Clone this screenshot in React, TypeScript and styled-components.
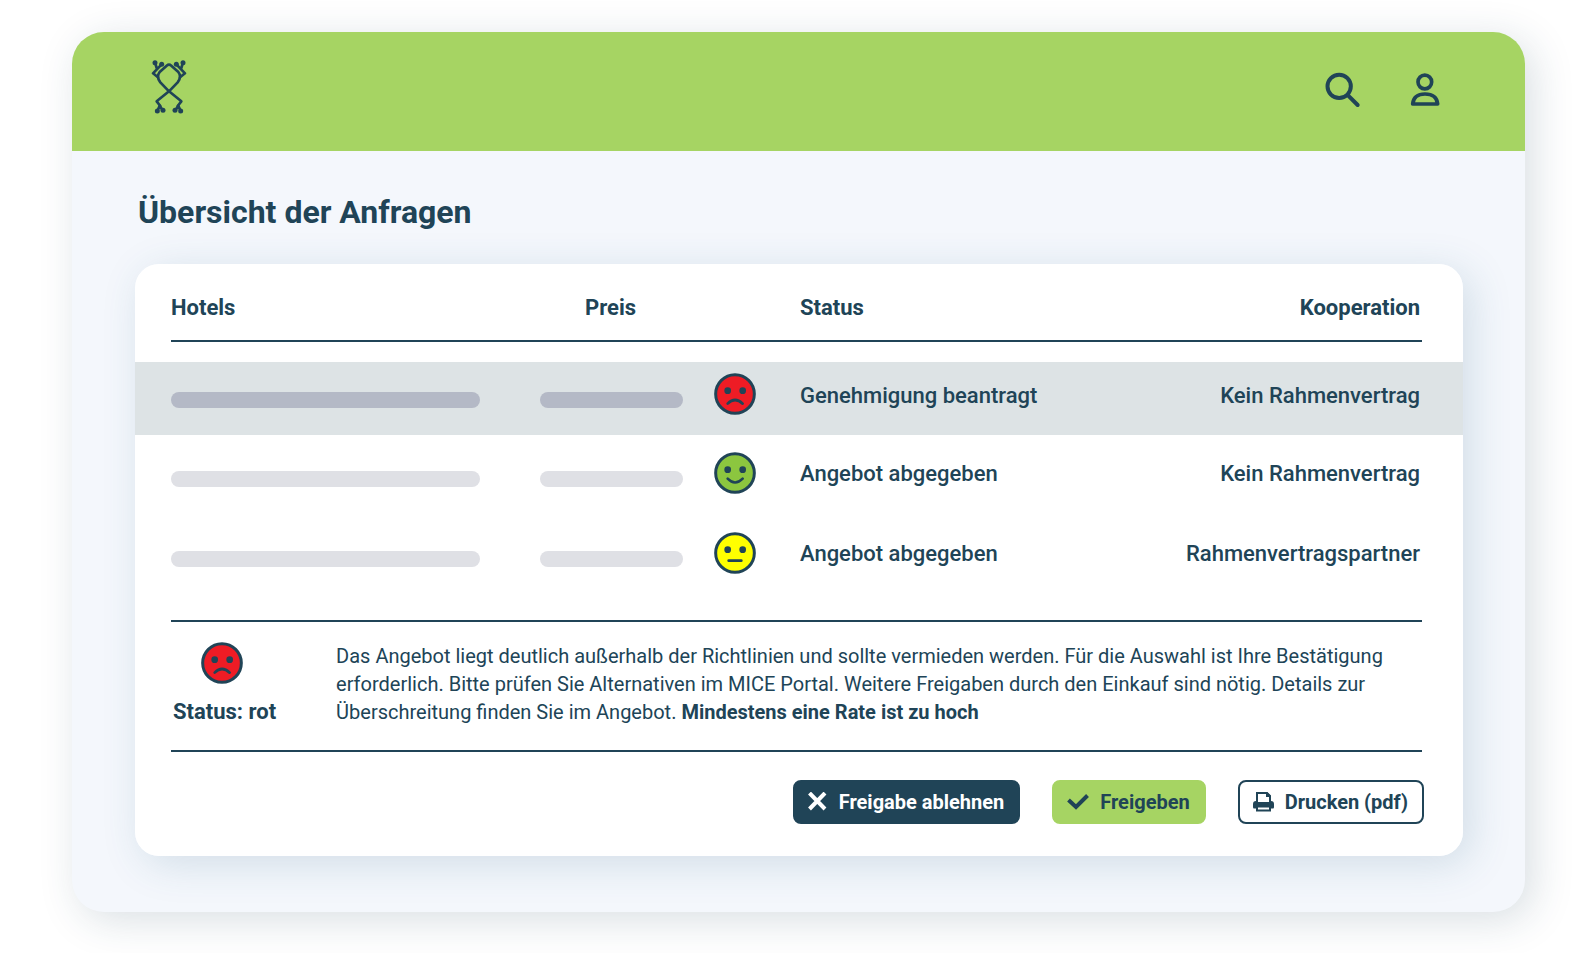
import React from "react";
import styled, { createGlobalStyle } from "styled-components";

const ink = "#204457";
const lime = "#a6d463";

const GlobalStyle = createGlobalStyle`
  *, *::before, *::after { box-sizing: border-box; }
  body {
    margin: 0;
    background: #ffffff;
    color: ${ink};
    font-family: Roboto, "Liberation Sans", sans-serif;
  }
`;

const Page = styled.div`
  padding: 32px 67px 41px 72px;
`;

const Window = styled.div`
  border-radius: 32px;
  background: #f4f7fc;
  box-shadow: 8px 8px 40px rgba(32, 68, 87, 0.17);
`;

const TopBar = styled.header`
  display: flex;
  align-items: center;
  justify-content: space-between;
  height: 119px;
  padding: 0 85px 10px 78px;
  border-radius: 32px 32px 0 0;
  background: ${lime};
`;

const LogoLink = styled.a`
  display: flex;
  color: ${ink};
`;

const Tools = styled.div`
  display: flex;
  align-items: center;
  gap: 49px;
  padding-top: 6px;
`;

const IconButton = styled.button`
  display: flex;
  padding: 0;
  border: 0;
  background: none;
  color: ${ink};
  cursor: pointer;
`;

const Main = styled.main`
  padding: 39px 62px 56px 63px;
`;

const Title = styled.h1`
  margin: 0 0 30px 3px;
  font-size: 32px;
  line-height: 44px;
  font-weight: 700;
`;

const Card = styled.section`
  overflow: hidden;
  padding: 0 41px 32px 36px;
  border-radius: 24px;
  background: #ffffff;
`;

const CardShadow = styled.div`
  border-radius: 24px;
  box-shadow: 8px 8px 40px rgba(40, 100, 130, 0.17);
`;

const Table = styled.table`
  width: 100%;
  table-layout: fixed;
  border-collapse: separate;
  border-spacing: 0;
  font-size: 22px;
  line-height: 28px;
`;

const Column = styled.col<{ $width?: number }>`
  width: ${(p) => (p.$width ? `${p.$width}px` : "auto")};
`;

const HeadCell = styled.th<{ $align?: string }>`
  height: 78px;
  padding: 11px 2px 0 0;
  border-bottom: 2px solid ${ink};
  font-weight: 700;
  text-align: ${(p) => p.$align ?? "left"};
`;

const Spacer = styled.tr`
  height: 20px;
`;

const Cell = styled.td<{ $align?: string }>`
  padding: 0 2px 2px 0;
  font-weight: 500;
  text-align: ${(p) => p.$align ?? "left"};
`;

const BarCell = styled(Cell)`
  padding: 7px 0 0;
`;

const FaceCell = styled(Cell)`
  padding: 0 0 4px 31px;
`;

const Bar = styled.div<{ $width: number }>`
  width: ${(p) => p.$width}px;
  max-width: 100%;
  height: 16px;
  border-radius: 8px;
  background: #dfe0e5;
`;

const Row = styled.tr<{ $active?: boolean }>`
  height: ${(p) => (p.$active ? 73 : 80)}px;
  ${(p) =>
    p.$active &&
    `
    background: #dde3e5;
    ${Cell} { padding-bottom: 5px; }
    ${FaceCell} { padding-bottom: 10px; }
    ${Bar} { background: #b4b9c6; }
    td:first-child { box-shadow: -36px 0 0 #dde3e5; }
    td:last-child { box-shadow: 41px 0 0 #dde3e5; }
  `}
`;

const FaceSvg = styled.svg`
  display: block;
  width: 42px;
  height: 42px;
`;

const Notice = styled.div`
  display: flex;
  gap: 60px;
  margin-top: 25px;
  padding: 20px 0 24px 2px;
  border-top: 2px solid ${ink};
  border-bottom: 2px solid ${ink};
`;

const NoticeStatus = styled.div`
  display: flex;
  flex-direction: column;
  gap: 14px;
  flex: none;
  font-size: 22px;
  line-height: 28px;
  font-weight: 700;

  ${FaceSvg} { margin-left: 28px; }
`;

const NoticeText = styled.p`
  margin: 0;
  font-size: 20px;
  line-height: 28px;
`;

const Actions = styled.div`
  display: flex;
  justify-content: flex-end;
  flex-wrap: wrap;
  gap: 32px;
  margin: 28px -2px 0 0;
`;

const Button = styled.button<{ $tone: "dark" | "lime" | "outline" }>`
  display: flex;
  align-items: center;
  gap: 11px;
  height: 44px;
  padding: 0 14px 0 13px;
  border: 2px solid ${(p) => (p.$tone === "lime" ? lime : ink)};
  border-radius: 8px;
  background: ${(p) => ({ dark: ink, lime, outline: "#ffffff" })[p.$tone]};
  color: ${(p) => (p.$tone === "dark" ? "#ffffff" : ink)};
  font: 700 20px/24px Roboto, "Liberation Sans", sans-serif;
  cursor: pointer;
`;

type Mood = "sad" | "happy" | "neutral";

const moods: Record<Mood, { fill: string; mouth: string; label: string }> = {
  sad: { fill: "#ee1c25", mouth: "M-22 29Q0 7 23 29", label: "rot" },
  happy: { fill: "#8cc63f", mouth: "M-22 17Q0 40 23 17", label: "grün" },
  neutral: { fill: "#ffff00", mouth: "M-19 23H19", label: "gelb" },
};

function Face({ mood }: { mood: Mood }) {
  const { fill, mouth, label } = moods[mood];
  return (
    <FaceSvg viewBox="-63 -63 126 126" role="img" aria-label={label}>
      <circle r="58" fill={fill} stroke={ink} strokeWidth="9" />
      <circle cx="-22" cy="-10" r="10" fill={ink} />
      <circle cx="23" cy="-10" r="10" fill={ink} />
      <path d={mouth} fill="none" stroke={ink} strokeWidth="8" strokeLinecap="round" />
    </FaceSvg>
  );
}

function FrogLogo() {
  return (
    <svg width="38" height="56" viewBox="60 42 114 168" fill="none" stroke="currentColor" strokeWidth="8" strokeLinejoin="round" strokeLinecap="round">
      <path d="M91 183L80 169L117 139L143 112Q156 95 145 81L124 62Q117 56 110 62L89 81Q78 95 91 112L117 139L154 169L143 183" />
      <path d="M84 97L69 85L95 58M75 53L81 72" />
      <path d="M150 97L165 85L139 58M159 53L153 72" />
      <path d="M82 198L89 182L98 196M152 198L145 182L136 196" />
      <g fill="currentColor" stroke="none">
        <circle cx="75" cy="53" r="7.500" />
        <circle cx="95" cy="58" r="7.500" />
        <circle cx="159" cy="53" r="7.500" />
        <circle cx="139" cy="58" r="7.500" />
        <circle cx="82" cy="198" r="7.500" />
        <circle cx="99" cy="196" r="7.500" />
        <circle cx="152" cy="198" r="7.500" />
        <circle cx="135" cy="196" r="7.500" />
      </g>
    </svg>
  );
}

function SearchIcon() {
  return (
    <svg width="36" height="36" viewBox="76 51 108 108" fill="none" stroke="currentColor" strokeWidth="12" strokeLinecap="round">
      <circle cx="118.500" cy="94" r="35" />
      <path d="M145 121L174 150" />
    </svg>
  );
}

function UserIcon() {
  return (
    <svg width="30" height="36" viewBox="331 51 90 108" fill="none" stroke="currentColor" strokeWidth="11" strokeLinejoin="round">
      <circle cx="375.500" cy="81" r="20.500" />
      <path d="M339 147H414Q411 117 376 117Q342 117 339 147Z" />
    </svg>
  );
}

function CrossIcon() {
  return (
    <svg width="20" height="20" viewBox="0 0 20 20" fill="none" stroke="currentColor" strokeWidth="4">
      <path d="M1.500 1L17 17M17 1L1.500 17" />
    </svg>
  );
}

function CheckIcon() {
  return (
    <svg width="22" height="20" viewBox="0 0 22 20" fill="none" stroke="currentColor" strokeWidth="4">
      <path d="M1.500 8L9 15L20.500 3.500" />
    </svg>
  );
}

function PrintIcon() {
  return (
    <svg width="21" height="20" viewBox="0 0 21 20" fill="none" stroke="currentColor" strokeWidth="2">
      <path d="M4 10V1H14L17 4V10" />
      <path d="M13 0V5H18V4L14 0Z" fill="currentColor" stroke="none" />
      <path d="M3 9H4V10H17V9H18Q21 9 21 12V15Q21 16.500 20 16.500H1Q0 16.500 0 15V12Q0 9 3 9Z" fill="currentColor" stroke="none" />
      <path d="M4 14.500H17V18.500H4Z" fill="#ffffff" />
    </svg>
  );
}

const requests: { mood: Mood; status: string; cooperation: string; active?: boolean }[] = [
  { mood: "sad", status: "Genehmigung beantragt", cooperation: "Kein Rahmenvertrag", active: true },
  { mood: "happy", status: "Angebot abgegeben", cooperation: "Kein Rahmenvertrag" },
  { mood: "neutral", status: "Angebot abgegeben", cooperation: "Rahmenvertragspartner" },
];

export default function App() {
  return (
    <>
      <GlobalStyle />
      <Page>
        <Window>
          <TopBar>
            <LogoLink href="#" aria-label="Startseite">
              <FrogLogo />
            </LogoLink>
            <Tools>
              <IconButton type="button" aria-label="Suche">
                <SearchIcon />
              </IconButton>
              <IconButton type="button" aria-label="Konto">
                <UserIcon />
              </IconButton>
            </Tools>
          </TopBar>
          <Main>
            <Title>Übersicht der Anfragen</Title>
            <CardShadow>
              <Card>
                <Table>
                  <colgroup>
                    <Column $width={369} />
                    <Column $width={143} />
                    <Column $width={117} />
                    <Column />
                    <Column />
                  </colgroup>
                  <thead>
                    <tr>
                      <HeadCell scope="col">Hotels</HeadCell>
                      <HeadCell scope="col" $align="center">Preis</HeadCell>
                      <HeadCell aria-label="Bewertung" />
                      <HeadCell scope="col">Status</HeadCell>
                      <HeadCell scope="col" $align="right">Kooperation</HeadCell>
                    </tr>
                  </thead>
                  <tbody>
                    <Spacer aria-hidden="true" />
                    {requests.map((r, i) => (
                      <Row key={i} $active={r.active}>
                        <BarCell><Bar $width={309} /></BarCell>
                        <BarCell><Bar $width={143} /></BarCell>
                        <FaceCell><Face mood={r.mood} /></FaceCell>
                        <Cell>{r.status}</Cell>
                        <Cell $align="right">{r.cooperation}</Cell>
                      </Row>
                    ))}
                  </tbody>
                </Table>
                <Notice>
                  <NoticeStatus>
                    <Face mood="sad" />
                    Status: rot
                  </NoticeStatus>
                  <NoticeText>
                    Das Angebot liegt deutlich außerhalb der Richtlinien und sollte vermieden werden. Für die Auswahl ist
                    Ihre Bestätigung erforderlich. Bitte prüfen Sie Alternativen im MICE Portal. Weitere Freigaben durch
                    den Einkauf sind nötig. Details zur Überschreitung finden Sie im Angebot.{" "}
                    <strong>Mindestens eine Rate ist zu hoch</strong>
                  </NoticeText>
                </Notice>
                <Actions>
                  <Button type="button" $tone="dark"><CrossIcon />Freigabe ablehnen</Button>
                  <Button type="button" $tone="lime"><CheckIcon />Freigeben</Button>
                  <Button type="button" $tone="outline"><PrintIcon />Drucken (pdf)</Button>
                </Actions>
              </Card>
            </CardShadow>
          </Main>
        </Window>
      </Page>
    </>
  );
}
